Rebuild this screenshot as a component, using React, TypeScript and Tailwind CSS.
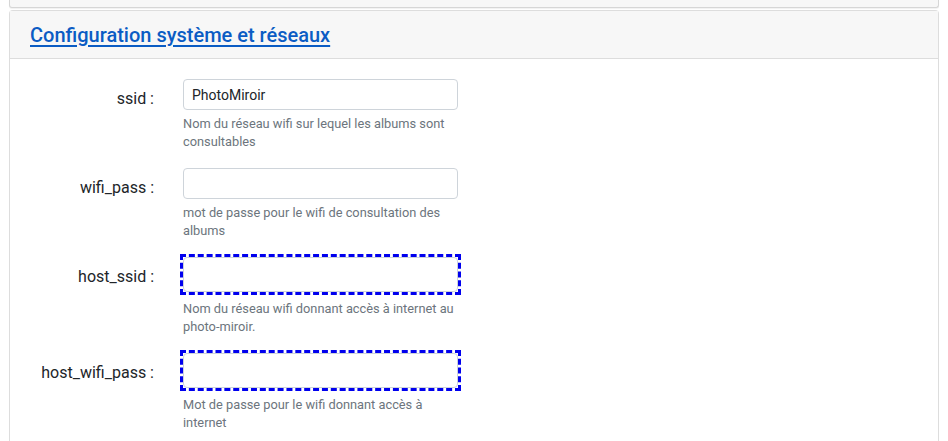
const font = { fontFamily: "Roboto, 'Liberation Sans', sans-serif" };

type Field = {
  label: string;
  value: string;
  help: string;
  flagged?: boolean;
};

const FIELDS: Field[] = [
  { label: "ssid :", value: "PhotoMiroir", help: "Nom du réseau wifi sur lequel les albums sont consultables" },
  { label: "wifi_pass :", value: "", help: "mot de passe pour le wifi de consultation des albums" },
  { label: "host_ssid :", value: "", help: "Nom du réseau wifi donnant accès à internet au photo-miroir.", flagged: true },
  { label: "host_wifi_pass :", value: "", help: "Mot de passe pour le wifi donnant accès à internet", flagged: true },
];

function FieldRow({ field }: { field: Field }) {
  const input = (
    <input
      type="text"
      defaultValue={field.value}
      className={`block w-[275px] rounded-[4px] border border-[#ced4da] bg-white px-[8px] text-[14px] text-[#212529] outline-none ${
        field.flagged ? "h-[35px]" : "h-[31px]"
      }`}
    />
  );

  return (
    <div className="flex">
      <label className="w-[144px] shrink-0 pt-[8px] text-right text-[16px] leading-[24px] text-[#212529]">
        {field.label}
      </label>
      <div className="ml-[29px] w-[276px]">
        {field.flagged ? (
          <div className="-mx-[3px] -my-[3px] w-[281px] border-[3px] border-dashed border-[#0000ee]">{input}</div>
        ) : (
          input
        )}
        <p className={`text-[12.8px] leading-[18px] text-[#6c757d] ${field.flagged ? "mt-[8px]" : "mt-[5px]"}`}>
          {field.help}
        </p>
      </div>
    </div>
  );
}

export default function App() {
  return (
    <div className="min-h-screen bg-white" style={font}>
      <div className="ml-[9px] h-[8px] w-[930px] rounded-b-[3px] border-x border-b border-[#d6d6d6] bg-[#f7f7f7] shadow-[0_1px_1px_rgba(0,0,0,0.06)]" />

      <div className="ml-[9px] mt-[2px] w-[930px] rounded-t-[4px] border-x border-t border-[#dddddd]">
        <div className="flex h-[48px] items-center border-b border-[#dddddd] bg-[#f7f7f7] px-[20px]">
          <a href="#" className="text-[20px] font-medium text-[#0b5cc4] underline underline-offset-[3px]">
            Configuration système et réseaux
          </a>
        </div>

        <div className="flex flex-col gap-[17px] bg-white pt-[20px] pb-[30px]">
          {FIELDS.map((f) => (
            <FieldRow key={f.label} field={f} />
          ))}
        </div>
      </div>
    </div>
  );
}
